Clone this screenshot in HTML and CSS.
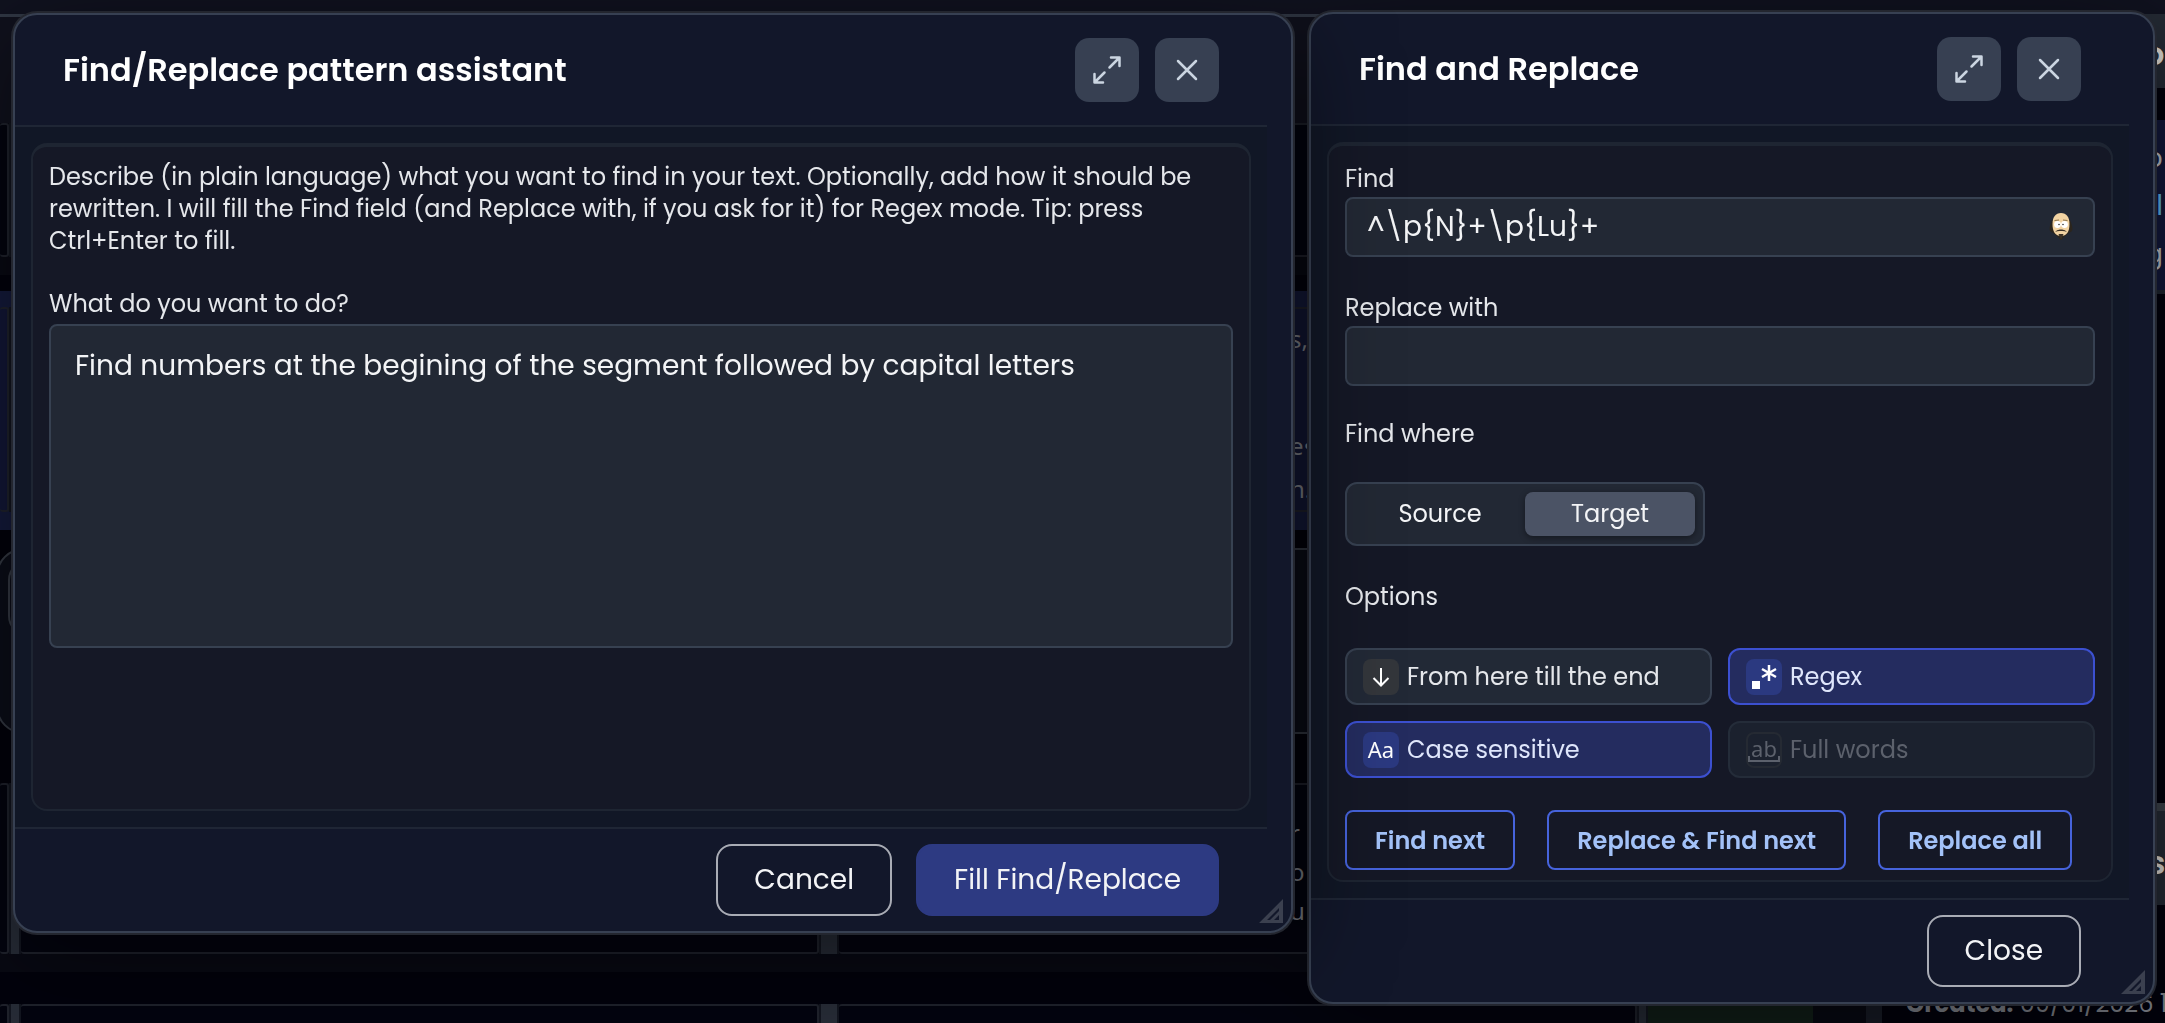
FILE: index.html
```html
<!DOCTYPE html>
<html lang="en">
<head>
    <meta charset="UTF-8">
    <meta name="viewport" content="width=device-width, initial-scale=1">
    <title>Find and Replace</title>
    <link rel="stylesheet" href="styles.css">
</head>
<body>

<!-- Editor behind the dialogs -->
<div class="editor" aria-hidden="true">
    <div class="segments">
        <div class="toolbar"></div>
        <div class="row row-head"></div>
        <div class="row row-short">
            <div class="cell"></div><div class="gutter"></div><div class="cell"></div><div class="gutter"></div><div class="cell"></div>
        </div>
        <div class="row row-active">
            <div class="cell"></div><div class="gutter"></div><div class="cell"></div><div class="gutter"></div>
            <div class="cell"><p class="seg-text">s,</p><p class="seg-text seg-next">e•</p><p class="seg-text">n.</p></div>
        </div>
        <div class="row-tools"><div class="tool-box"><div class="tool-inner"></div></div></div>
        <div class="row row-tall">
            <div class="cell"></div><div class="gutter"></div><div class="cell"></div><div class="gutter"></div>
            <div class="cell"><p class="seg-text">r</p><p class="seg-text">o</p><p class="seg-text">u</p></div>
        </div>
        <div class="row row-last">
            <div class="cell"></div><div class="gutter"></div><div class="cell"></div><div class="gutter"></div><div class="cell"></div><div class="gutter"></div><div class="status"></div>
        </div>
    </div>
    <div class="side">
        <div class="side-head">or</div>
        <div class="side-match"><p>o</p><p class="mark">l</p><p>g</p></div>
        <div class="side-foot">s</div>
        <p class="side-meta side-colon">:</p>
        <p class="side-meta"><b>Created:</b> 09/01/2026 1</p>
    </div>
</div>

<main class="desktop">

    <!-- Pattern assistant -->
    <section class="dialog assistant" role="dialog" aria-labelledby="assistantTitle">
        <header class="dialog-header">
            <h2 id="assistantTitle">Find/Replace pattern assistant</h2>
            <button class="icon-btn" type="button" aria-label="Expand">
                <svg viewBox="0 0 32 32"><path d="M18.500 13.500 28 4M20 3.500h8.500V12M13.500 18.500 4 28M3.500 20v8.500H12"/></svg>
            </button>
            <button class="icon-btn" type="button" aria-label="Close dialog">
                <svg viewBox="0 0 32 32"><path d="M7 7l18 18M25 7 7 25"/></svg>
            </button>
        </header>
        <div class="dialog-body">
            <div class="panel">
                <p class="hint">Describe (in plain language) what you want to find in your text. Optionally, add how it should be rewritten. I will fill the Find field (and Replace with, if you ask for it) for Regex mode. Tip: press Ctrl+Enter to fill.</p>
                <label class="label" for="request">What do you want to do?</label>
                <textarea class="field request" id="request" spellcheck="false">Find numbers at the begining of the segment followed by capital letters</textarea>
            </div>
        </div>
        <footer class="dialog-footer">
            <button class="btn" type="button">Cancel</button>
            <button class="btn btn-primary" type="button">Fill Find/Replace</button>
        </footer>
        <svg class="grip" viewBox="0 0 24 24"><path fill-rule="evenodd" d="M24 0v24H0zM20 9 8 21h3L20 12zM20 16l-5 5h5z"/></svg>
    </section>

    <!-- Find and replace -->
    <section class="dialog finder" role="dialog" aria-labelledby="finderTitle">
        <header class="dialog-header">
            <h2 id="finderTitle">Find and Replace</h2>
            <button class="icon-btn" type="button" aria-label="Expand">
                <svg viewBox="0 0 32 32"><path d="M18.500 13.500 28 4M20 3.500h8.500V12M13.500 18.500 4 28M3.500 20v8.500H12"/></svg>
            </button>
            <button class="icon-btn" type="button" aria-label="Close dialog">
                <svg viewBox="0 0 32 32"><path d="M7 7l18 18M25 7 7 25"/></svg>
            </button>
        </header>
        <div class="dialog-body">
            <form class="panel">
                <label class="label" for="find">Find</label>
                <div class="find-wrap">
                    <input class="field" id="find" type="text" value="^\p{N}+\p{Lu}+" spellcheck="false">
                    <button class="helper" type="button" aria-label="Pattern assistant">
                        <svg viewBox="0 0 24 28">
                            <path fill="#2b251d" d="M3 8C1 13 0 16 1 19l6 4 5 5 5-5 6-4c1-3 0-6-2-11z"/>
                            <path fill="#f2d3a2" d="M12 1c5.500 0 8.500 4 8.500 11 0 8-3 12-8.500 12S3.500 20 3.500 12C3.500 5 6.500 1 12 1z"/>
                            <circle cx="8.500" cy="12.500" r="3.400" fill="#fff"/>
                            <circle cx="15.500" cy="12.500" r="3.400" fill="#fff"/>
                            <circle cx="10" cy="12.500" r=".8" fill="#333"/>
                            <circle cx="14" cy="12.500" r=".8" fill="#333"/>
                            <path fill="#3a3025" d="M6 20q2-3 6-2.500 4-.5 6 2.500-3-1.500-6-1-3-.5-6 1zM9.500 22h5L12 28z"/>
                            <path fill="none" stroke="#8f754c" d="M5.500 8.500 10 8M14 8l4.500.5"/>
                        </svg>
                    </button>
                </div>
                <label class="label label-next" for="replace">Replace with</label>
                <input class="field" id="replace" type="text">

                <fieldset class="group">
                    <legend class="label">Find where</legend>
                    <div class="segmented">
                        <label><input type="radio" name="where"><span>Source</span></label>
                        <label><input type="radio" name="where" checked><span>Target</span></label>
                    </div>
                </fieldset>

                <fieldset class="group group-options">
                    <legend class="label">Options</legend>
                    <div class="options">
                        <label class="option">
                            <input type="checkbox">
                            <svg class="badge" viewBox="0 0 36 36"><path class="line" d="M18 9v17.500M10.500 19l7.500 7.500 7.500-7.500"/></svg>
                            From here till the end
                        </label>
                        <label class="option">
                            <input type="checkbox" checked>
                            <svg class="badge" viewBox="0 0 36 36"><path d="M6 22h8v8H6z"/><path class="line thick" d="M23 6v16M16 10l14 8M30 10l-14 8"/></svg>
                            Regex
                        </label>
                        <label class="option">
                            <input type="checkbox" checked>
                            <span class="badge badge-text">Aa</span>
                            Case sensitive
                        </label>
                        <label class="option disabled">
                            <input type="checkbox" disabled>
                            <span class="badge badge-text badge-word">ab</span>
                            Full words
                        </label>
                    </div>
                </fieldset>

                <div class="actions">
                    <button class="action" type="button">Find next</button>
                    <button class="action" type="button">Replace &amp; Find next</button>
                    <button class="action" type="button">Replace all</button>
                </div>
            </form>
        </div>
        <footer class="dialog-footer">
            <button class="btn" type="button">Close</button>
        </footer>
        <svg class="grip" viewBox="0 0 24 24"><path fill-rule="evenodd" d="M24 0v24H0zM20 9 8 21h3L20 12zM20 16l-5 5h5z"/></svg>
    </section>

</main>
</body>
</html>
```
FILE: styles.css
```css
* {
    box-sizing: border-box;
}

body {
    margin: 0;
    min-height: 100vh;
    background: #02020c;
    color: #e5e7eb;
    font-family: Poppins, Inter, sans-serif;
    font-size: 24px;
    line-height: 32px;
}

h2, p, fieldset {
    margin: 0;
}

button, input, textarea {
    font-family: inherit;
}

/* Editor behind the dialogs */
.editor {
    position: fixed;
    inset: 0;
    display: flex;
    overflow: hidden;
    background: #10121f;
    font-family: "Noto Sans", sans-serif;
    color: #83868e;
}

.segments {
    flex: 1;
    background: #02020c;
}

.toolbar {
    height: 17px;
    background: #10121f;
    border-bottom: 3px solid #303744;
}

.row {
    display: grid;
    grid-template-columns: 9px 12px 1fr 20px 1fr 11px 165px 53px;
    padding-bottom: 18px;
    background: #080913;
}

.row-head {
    height: 106px;
    background: #10111d;
}

.row .cell {
    background: #03040f;
    border: 2px solid #1f222c;
    border-left-width: 0;
    border-radius: 3px;
}

.gutter {
    background: #272c37;
    border: solid #12151f;
    border-width: 0 2px;
}

.row-short {
    height: 152px;
    margin-bottom: 16px;
}

.row-active {
    height: 239px;
    padding-top: 16px;
    background: #141a3b;
}

.row-active .cell {
    background: #121737;
}

.seg-text {
    padding-left: 451px;
    line-height: 39px;
}

.row-active .seg-text {
    padding-top: 10px;
}

.row-active .seg-next {
    padding-top: 68px;
}

.row-active .seg-next + .seg-text {
    padding-top: 4px;
}

.row-tools {
    height: 253px;
    padding: 18px 0;
    background: #02020b;
}

.tool-box {
    height: 186px;
    margin-left: -4px;
    padding: 10px;
    background: #0b0d18;
    border: 2px solid #343943;
    border-radius: 28px;
}

.tool-inner {
    width: 50%;
    height: 76px;
    border: 2px solid #343943;
    border-radius: 20px;
}

.row-tall {
    height: 189px;
    margin-bottom: 32px;
}

.row-tall .cell:last-child {
    padding-top: 28px;
}

.row-last {
    height: 60px;
}

.status {
    background: #121f19;
}

.side {
    width: 299px;
    margin-top: 14px;
    border-left: 16px solid #181c27;
    background: #02020c;
}

.side-head, .side-foot {
    padding-left: 262px;
    background: #242a34;
    color: #d9d5cf;
    font-family: Poppins, Inter, sans-serif;
    font-size: 32px;
    font-weight: 600;
}

.side-head {
    height: 74px;
    padding-top: 24px;
}

.side-match {
    height: 174px;
    margin-top: 32px;
    padding: 12px 0 0 264px;
    border-bottom: 4px solid #1f252f;
    background: #13183a;
    color: #b8babf;
    font-size: 28px;
    line-height: 48px;
}

.side-match .mark {
    padding-left: 10px;
    color: #5fb3e4;
}

.side-foot {
    height: 102px;
    margin-top: 509px;
    padding-top: 36px;
    padding-left: 266px;
    border-top: 8px solid #3b4149;
}

.side-meta {
    padding-left: 24px;
    line-height: 50px;
    font-family: Poppins, Inter, sans-serif;
    white-space: nowrap;
}

.side-colon {
    padding: 24px 0 0 268px;
    font-weight: 600;
}

/* Dialog windows */
.desktop {
    position: relative;
    display: grid;
    grid-template-columns: 1280fr 846fr;
    align-items: start;
    gap: 16px;
    padding: 12px 10px 12px 13px;
}

.dialog {
    position: relative;
    padding-right: 24px;
    background: #12172a;
    border: 2px solid #374052;
    border-radius: 24px;
    box-shadow: 0 0 0 2px #23262f, 0 24px 96px rgba(0, 0, 0, 0.5);
}

.assistant {
    z-index: 1;
    margin-top: 1px;
}

.dialog-header {
    display: flex;
    align-items: center;
    gap: 16px;
    height: 112px;
    padding: 0 48px;
    border-bottom: 2px solid #1f2635;
}

.dialog-header h2 {
    flex: 1;
    color: #fff;
    font-size: 32px;
    font-weight: 600;
}

.icon-btn {
    display: grid;
    place-items: center;
    width: 64px;
    height: 64px;
    padding: 0;
    background: #374052;
    border: 0;
    border-radius: 14px;
}

.icon-btn svg {
    width: 32px;
    height: 32px;
    fill: none;
    stroke: #cbd5e1;
    stroke-width: 2.500;
    stroke-linecap: round;
    stroke-linejoin: round;
}

.dialog-body {
    padding: 16px;
    background: #111726;
}

.panel {
    padding: 14px 16px 10px;
    background: #151826;
    border: 2px solid #1e2532;
    border-top-width: 4px;
    border-radius: 16px;
}

.assistant .panel {
    min-height: 668px;
}

.finder .panel {
    padding-top: 17px;
}

.hint {
    margin-bottom: 31px;
}

.label {
    display: block;
    margin-bottom: 4px;
    padding: 0;
}

.finder .label {
    margin-bottom: 2px;
}

.field {
    display: block;
    width: 100%;
    height: 60px;
    padding: 0 20px;
    background: #222834;
    border: 2px solid #374151;
    border-radius: 8px;
    color: #f3f4f6;
    font-size: 28px;
}

.request {
    height: 324px;
    padding: 20px 24px;
    line-height: 40px;
    resize: none;
}

.find-wrap {
    position: relative;
}

/* Sits inside the right end of the Find box */
.helper {
    position: absolute;
    top: 15px;
    right: 22px;
    width: 24px;
    height: 28px;
    padding: 0;
    background: none;
    border: 0;
}

.helper svg {
    display: block;
}

.label-next {
    margin-top: 35px;
}

.group {
    min-width: 0;
    margin-top: 32px;
    padding: 0;
    border: 0;
}

.finder .group .label {
    margin-bottom: 32px;
}

.group-options {
    margin-top: 35px;
}

.finder .group-options .label {
    margin-bottom: 35px;
}

.segmented {
    display: inline-grid;
    grid-template-columns: 1fr 1fr;
    width: 360px;
    height: 64px;
    padding: 8px;
    vertical-align: top;
    background: #222834;
    border: 2px solid #374151;
    border-radius: 12px;
}

.segmented input, .option input {
    position: absolute;
    opacity: 0;
}

.segmented span {
    display: block;
    border-radius: 8px;
    color: #f3f4f6;
    line-height: 44px;
    text-align: center;
}

.segmented input:checked + span {
    background: #4b5365;
    box-shadow: 0 2px 6px rgba(0, 0, 0, 0.4);
}

.options {
    display: grid;
    grid-template-columns: 1fr 1fr;
    gap: 16px;
}

.option {
    display: flex;
    align-items: center;
    gap: 8px;
    height: 57px;
    padding: 0 16px;
    background: #222936;
    border: 2px solid #374151;
    border-radius: 12px;
}

.option:has(input:checked) {
    background: #242c5f;
    border-color: #3c50d0;
    color: #dfe6fb;
}

.badge {
    width: 36px;
    height: 36px;
    background: #33363b;
    border-radius: 8px;
    fill: #fff;
}

.badge .line {
    fill: none;
    stroke: #fff;
    stroke-width: 2;
}

.badge .thick {
    stroke-width: 2.500;
}

.badge-text {
    color: #fff;
    font-family: "Noto Sans", sans-serif;
    font-size: 22px;
    line-height: 34px;
    text-align: center;
}

.option:has(input:checked) .badge {
    background: #2b3980;
}

.option.disabled {
    background: #1b212e;
    border-color: #242c39;
    color: #5c616c;
}

.badge-word {
    position: relative;
    background: none;
    border: 2px solid #252a33;
    color: #5c616c;
    line-height: 28px;
}

/* Bracket under the letters */
.badge-word::after {
    content: "";
    position: absolute;
    inset: 22px 0 4px;
    border: solid #5c616c;
    border-width: 0 2px 2px;
}

.actions {
    display: flex;
    gap: 32px;
    margin-top: 32px;
}

.action {
    height: 60px;
    padding: 0 28px;
    background: none;
    border: 2px solid #4663dc;
    border-radius: 8px;
    color: #a3c2f8;
    font-size: 24px;
    font-weight: 600;
    white-space: nowrap;
}

.dialog-footer {
    display: flex;
    justify-content: flex-end;
    gap: 24px;
    padding: 15px 48px;
    border-top: 2px solid #1f2635;
}

.btn {
    height: 72px;
    padding: 0 36px;
    background: none;
    border: 2px solid #a9acb5;
    border-radius: 16px;
    color: #f3f4f6;
    font-size: 28px;
}

.btn-primary {
    background: #2d3a82;
    border-color: #2d3a82;
}

/* Resize handle in the corner */
.grip {
    position: absolute;
    right: 8px;
    bottom: 8px;
    width: 24px;
    height: 24px;
    fill: #3b404f;
}
```
